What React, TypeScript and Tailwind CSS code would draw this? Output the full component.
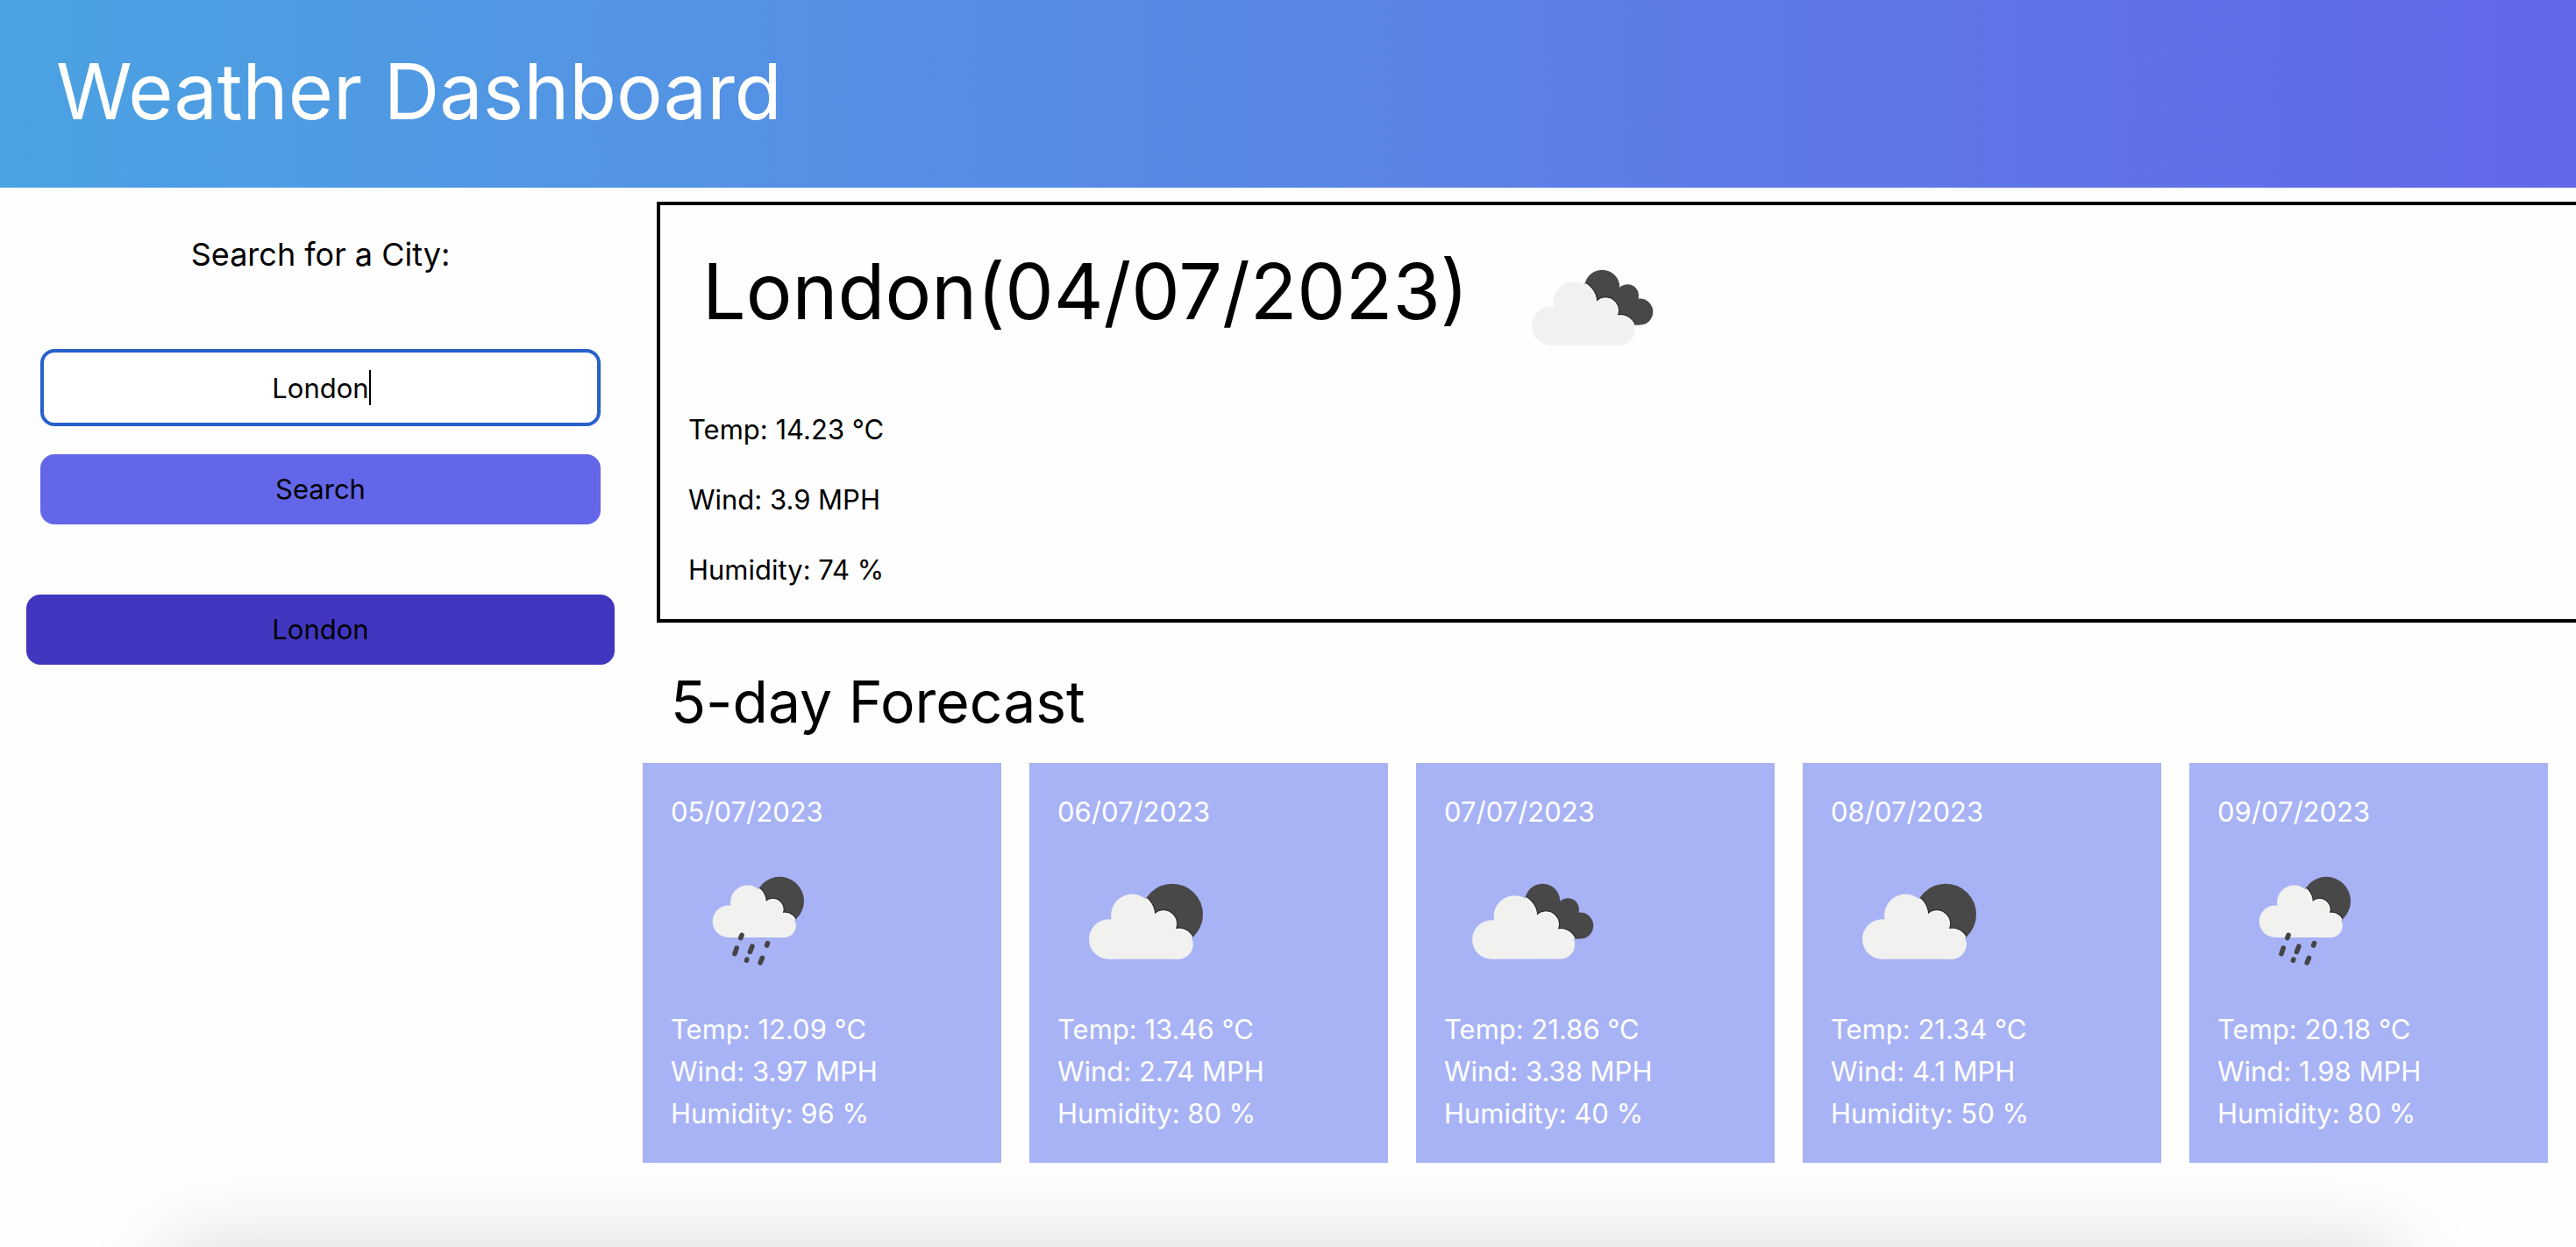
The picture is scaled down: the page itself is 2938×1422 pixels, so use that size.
import { useId } from "react";

type Circle = [cx: number, cy: number, r: number];

type IconKind = "rain" | "scattered" | "broken";

const stats = (temp: string, wind: string, humidity: string) => [
  `Temp: ${temp} °C`,
  `Wind: ${wind} MPH`,
  `Humidity: ${humidity} %`,
];

const today = stats("14.23", "3.9", "74");

const forecast: { date: string; icon: IconKind; lines: string[] }[] = [
  { date: "05/07/2023", icon: "rain", lines: stats("12.09", "3.97", "96") },
  { date: "06/07/2023", icon: "scattered", lines: stats("13.46", "2.74", "80") },
  { date: "07/07/2023", icon: "broken", lines: stats("21.86", "3.38", "40") },
  { date: "08/07/2023", icon: "scattered", lines: stats("21.34", "4.1", "50") },
  { date: "09/07/2023", icon: "rain", lines: stats("20.18", "1.98", "80") },
];

const shapes: Record<IconKind, { back: Circle[]; backBody?: string; front: Circle[]; body: string }> = {
  rain: {
    back: [[124.3, 77.5, 27.7]],
    front: [[66, 100.7, 18.3], [88.3, 78.5, 20], [116.5, 87, 11.7], [130, 105, 14]],
    body: "M66 119V90L72 78H100L117 84L128 92L130 119Z",
  },
  scattered: {
    back: [[131, 92.7, 35]],
    front: [[58.7, 121, 22.7], [86, 93.3, 24.7], [121, 103.3, 14.7], [138.7, 126.4, 17.3]],
    body: "M58.7 143.7V110L66 93H106L121 100L134 112L138.7 143.7Z",
  },
  broken: {
    back: [[112.3, 77.7, 20], [141.3, 87, 12.7], [155.3, 105.6, 15]],
    backBody: "M112 78L132 80L150 95L155 120.6L105 122Z",
    front: [[54.3, 121.5, 22.2], [81.3, 94.7, 24.5], [116.3, 104, 14.3], [133.3, 126.6, 17]],
    body: "M54.3 143.7V110L61 94H102L116 101L129 112L133.3 143.6Z",
  },
};

const drops = [
  "M81 116.4L79.8 119.6",
  "M75.2 131.2L73 137.6",
  "M92.8 129.2L90.4 135.4",
  "M110.5 125.6L109.6 128",
  "M86.8 144.2L86.4 145.2",
  "M104.4 142.4L102.2 147.8",
];

function Puffs({ circles, body }: { circles: Circle[]; body?: string }) {
  return (
    <>
      {circles.map(([cx, cy, r]) => (
        <circle key={`${cx}-${cy}`} cx={cx} cy={cy} r={r} />
      ))}
      {body && <path d={body} />}
    </>
  );
}

function WeatherIcon({ kind }: { kind: IconKind }) {
  const clip = useId();
  const { back, backBody, front, body } = shapes[kind];
  return (
    <svg viewBox="0 0 200 200" className="size-[200px] shrink-0" role="img" aria-label={kind}>
      <clipPath id={clip}>
        <Puffs circles={back} body={backBody} />
      </clipPath>
      <g fill="#484849">
        <Puffs circles={back} body={backBody} />
      </g>
      <g clipPath={`url(#${clip})`}>
        <g fill="#2c2c2e" stroke="#2c2c2e" strokeWidth="3">
          <Puffs circles={front} body={body} />
        </g>
        <g fill="#fdfdfd" stroke="#fdfdfd" strokeWidth="0.8">
          <Puffs circles={front} body={body} />
        </g>
      </g>
      <g fill="#f1f1f0">
        {front.map(([cx, cy, r], i) => (
          <circle key={cx} cx={i > 0 ? cx - 0.7 : cx} cy={i > 0 ? cy + 0.5 : cy} r={i > 0 ? r - 0.5 : r} />
        ))}
        <path d={body} />
      </g>
      {kind === "rain" && (
        <g stroke="#444446" strokeWidth="5.6" strokeLinecap="round">
          {drops.map((d) => (
            <path key={d} d={d} />
          ))}
        </g>
      )}
    </svg>
  );
}

export default function App() {
  return (
    <div className="relative min-h-screen overflow-hidden bg-[#fefefe] font-[Inter,sans-serif] text-[31px] leading-[48px] text-black">
      <header className="bg-linear-to-r from-[#4aa2e2] to-[#6366e8] px-16 pt-14 pb-[62px]">
        <h1 className="text-[88px] leading-[96px] text-white">Weather Dashboard</h1>
      </header>

      <div className="flex">
        <aside className="w-[733px] shrink-0 pt-12 pr-8 pl-[30px] text-center">
          <form className="mb-20 flex flex-col px-4" onSubmit={(e) => e.preventDefault()}>
            <label htmlFor="city" className="mb-20 text-4xl leading-[56px]">
              Search for a City:
            </label>
            <div className="relative mb-8">
              <input
                id="city"
                type="text"
                defaultValue="London"
                className="block h-[88px] w-full rounded-2xl border-4 border-[#2860cc] bg-white text-center outline-none"
              />
              <span
                aria-hidden="true"
                className="absolute top-6 left-1/2 ml-[55px] h-10 w-0.5 bg-black"
              />
            </div>
            <button type="submit" className="h-20 rounded-2xl bg-[#6366e8]">
              Search
            </button>
          </form>
          <button type="button" className="h-20 w-full rounded-2xl bg-[#4036c0]">
            London
          </button>
        </aside>

        <main className="min-w-0 flex-1">
          <section className="my-4 -mr-4 ml-4 border-4 border-black p-4">
            <div className="flex items-start">
              <h2 className="pt-8 pr-10 pl-8 text-[88px] leading-[100px]">London(04/07/2023)</h2>
              <WeatherIcon kind="broken" />
            </div>
            {today.map((line) => (
              <p key={line} className="p-4">
                {line}
              </p>
            ))}
          </section>

          <h2 className="px-8 pt-[34px] pb-[30px] text-[66px] leading-[80px]">5-day Forecast</h2>
          <div className="grid grid-cols-5 gap-8 pr-8">
            {forecast.map(({ date, icon, lines }) => (
              <article key={date} className="bg-[#a8b3f5] p-8 text-white">
                <p>{date}</p>
                <WeatherIcon kind={icon} />
                {lines.map((line) => (
                  <p key={line}>{line}</p>
                ))}
              </article>
            ))}
          </div>
        </main>
      </div>

      <div className="pointer-events-none absolute right-[215px] -bottom-28 left-[205px] h-24 shadow-[0_0_100px_10px_rgba(0,0,0,0.17)]" />
    </div>
  );
}
